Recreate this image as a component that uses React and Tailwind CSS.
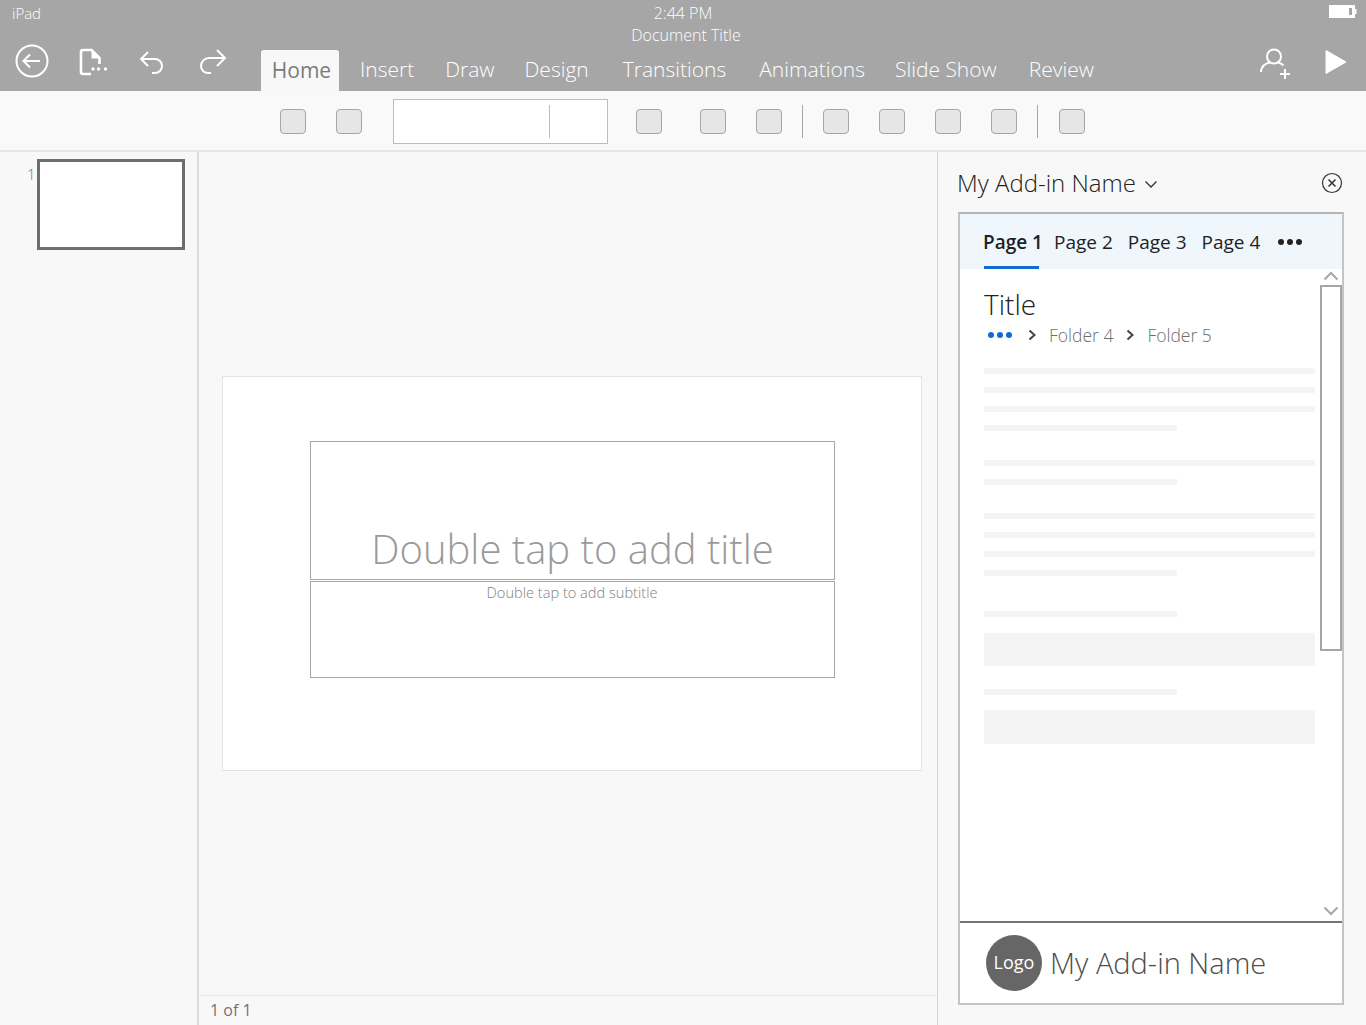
import React from 'react';

const tabs = [
  { label: 'Insert', left: 'ml-[21px]' },
  { label: 'Draw', left: 'ml-[31px]' },
  { label: 'Design', left: 'ml-[30px]' },
  { label: 'Transitions', left: 'ml-[34px]' },
  { label: 'Animations', left: 'ml-[33px]' },
  { label: 'Slide Show', left: 'ml-[30px]' },
  { label: 'Review', left: 'ml-[32px]' },
];

const ToolButton = ({ className = '' }) => (
  <div className={`w-[26px] h-[25px] rounded-[4px] border border-[#a6a6a6] bg-[#e6e6e6] shrink-0 ${className}`} />
);

const Line = ({ short, className = '' }) => (
  <div className={`h-[6px] bg-[#f4f4f4] ${short ? 'w-[193px]' : 'w-[331px]'} ${className}`} />
);

const Dots = ({ color, className = '' }) => (
  <div className={`flex gap-[3px] ${className}`}>
    <div className={`w-[6px] h-[6px] rounded-full ${color}`} />
    <div className={`w-[6px] h-[6px] rounded-full ${color}`} />
    <div className={`w-[6px] h-[6px] rounded-full ${color}`} />
  </div>
);

const Chevron = ({ className = '' }) => (
  <svg width="9" height="12" viewBox="0 0 9 12" fill="none" stroke="#444" strokeWidth="2" className={className}>
    <path d="M1.5 1.5 6.5 6 1.5 10.5" />
  </svg>
);

export default function App() {
  return (
    <div className="w-[1366px] h-[1025px] flex flex-col overflow-hidden bg-[#f8f8f8] font-['Open_Sans',sans-serif] font-light">
      {/* Title bar and ribbon tabs */}
      <div className="h-[91px] bg-[#a6a6a6] text-white shrink-0 flex flex-col">
        <div className="h-[46px] relative flex justify-center shrink-0">
          <div className="absolute left-[12px] top-[3px] text-[15px] leading-[20px]">iPad</div>
          <div className="text-center text-[16px] leading-[20px] pt-[3px]">
            <div>2:44 PM</div>
            <div className="mt-[2px] pl-[6px]">Document Title</div>
          </div>
          <svg width="28" height="14" viewBox="0 0 28 14" className="absolute left-[1329px] top-[5px]">
            <rect x="0" y="0" width="26" height="13" fill="#fff" />
            <rect x="20" y="3" width="3" height="7" fill="#a6a6a6" />
            <rect x="26" y="4" width="1.5" height="5" fill="#fff" />
          </svg>
        </div>
        <div className="flex-1 flex items-stretch relative">
          <div className="w-[261px] shrink-0 relative">
            <svg width="36" height="36" viewBox="0 0 36 36" fill="none" stroke="#fff" strokeWidth="2" className="absolute left-[14px] top-[-3px]">
              <circle cx="18" cy="18" r="15.5" />
              <path d="M26 18H10M16 11.5 9.5 18l6.5 6.5" />
            </svg>
            <svg width="32" height="30" viewBox="0 0 32 30" fill="none" stroke="#fff" className="absolute left-[79px] top-[2px]">
              <path d="M12 26H4a2 2 0 0 1-2-2V4a2 2 0 0 1 2-2h8.500l8 8v6" strokeWidth="2.600" strokeLinejoin="round" />
              <path d="M13 2.500V10h7z" fill="#fff" strokeWidth="1" />
              <circle cx="14" cy="21" r="1.700" fill="#fff" stroke="none" />
              <circle cx="19.500" cy="21" r="1.700" fill="#fff" stroke="none" />
              <circle cx="26.500" cy="21" r="1.700" fill="#fff" stroke="none" />
            </svg>
            <svg width="26" height="26" viewBox="0 0 26 26" fill="none" stroke="#fff" strokeWidth="2" className="absolute left-[139px] top-[4px]">
              <path d="M9 2 2 9l7 7M2 9h14a7 7 0 0 1 7 7 7 7 0 0 1-7 7h-3" />
            </svg>
            <svg width="28" height="28" viewBox="0 0 28 28" fill="none" stroke="#fff" strokeWidth="2" className="absolute left-[199px] top-[2px]">
              <path d="M18 2l8 8-8 8M26 10H10a8 8 0 0 0-8 8 7 7 0 0 0 7 7h3" />
            </svg>
          </div>
          <div className="w-[78px] h-[41px] mt-[4px] bg-[#f8f8f8] rounded-t-[3px] text-[#7a7a7a] text-[21px] leading-[40px] text-center font-normal shrink-0 pl-[3px]">
            Home
          </div>
          {tabs.map((t) => (
            <div key={t.label} className={`text-[21px] leading-[46px] whitespace-nowrap ${t.left}`}>
              {t.label}
            </div>
          ))}
          <svg width="34" height="34" viewBox="0 0 34 34" fill="none" stroke="#fff" strokeWidth="2" className="absolute left-[1259px] top-[1px]">
            <circle cx="15" cy="9.500" r="7" />
            <path d="M2 25c0-6 5-9 9-9.500M19 15.500c2 .5 4 1.500 5.500 3" />
            <path d="M26 22v10M21 27h10" />
          </svg>
          <svg width="22" height="26" viewBox="0 0 22 26" className="absolute left-[1325px] top-[3px]">
            <path d="M1 1.500 21 13 1 24.500Z" fill="#fff" stroke="#fff" strokeLinejoin="round" />
          </svg>
        </div>
      </div>

      {/* Ribbon commands */}
      <div className="h-[61px] shrink-0 bg-[#f9f9f9] border-b-2 border-[#e6e6e6] flex items-center pl-[280px] pt-[1px]">
        <ToolButton />
        <ToolButton className="ml-[30px]" />
        <div className="ml-[31px] w-[215px] h-[45px] bg-white border border-[#bdbdbd] flex items-center pl-[155px] shrink-0">
          <div className="w-px h-[33px] bg-[#bdbdbd]" />
        </div>
        <ToolButton className="ml-[28px]" />
        <ToolButton className="ml-[38px]" />
        <ToolButton className="ml-[30px]" />
        <div className="ml-[20px] w-px h-[33px] bg-[#a6a6a6]" />
        <ToolButton className="ml-[20px]" />
        <ToolButton className="ml-[30px]" />
        <ToolButton className="ml-[30px]" />
        <ToolButton className="ml-[30px]" />
        <div className="ml-[20px] w-px h-[33px] bg-[#a6a6a6]" />
        <ToolButton className="ml-[21px]" />
      </div>

      <div className="flex-1 flex min-h-0">
        {/* Slide rail */}
        <div className="w-[199px] shrink-0 border-r-2 border-[#dcdcdc] pl-[27px] pt-[7px] flex items-start">
          <div className="text-[15px] leading-[20px] text-[#777] w-[9px] mt-[5px]">1</div>
          <div className="w-[148px] h-[91px] bg-white border-[3px] border-[#6e6e6e] ml-[1px]" />
        </div>

        {/* Slide stage */}
        <div className="flex-1 flex flex-col min-w-0">
          <div className="flex-1 flex items-center pl-[23px]">
            <div className="w-[700px] h-[395px] bg-white border border-[#e3e3e3] pt-[64px] flex flex-col items-center">
              <div className="w-[525px] ml-[1px] h-[139px] border border-[#a6a6a6] flex items-end justify-center text-[40px] leading-[54px] text-[#9a9a9a] pb-[3px]">
                Double tap to add title
              </div>
              <div className="w-[525px] h-[97px] mt-[1px] border border-[#a6a6a6] text-center text-[14.600px] leading-[19px] text-[#808080] pt-[1px]">
                Double tap to add subtitle
              </div>
            </div>
          </div>
          <div className="h-[30px] border-t border-[#e6e6e6] pl-[11px] text-[16px] leading-[29px] text-[#737373] font-normal">
            1 of 1
          </div>
        </div>

        {/* Task pane */}
        <div className="w-[429px] shrink-0 border-l border-[#d6d6d6] pl-[19px] flex flex-col">
          <div className="h-[60px] flex items-center shrink-0 pt-[2px]">
            <div className="text-[24px] leading-[32px] text-[#222]">My Add-in Name</div>
            <svg width="14" height="9" viewBox="0 0 14 9" fill="none" stroke="#333" strokeWidth="1.300" className="ml-[8px] mt-[3px]">
              <path d="M1.500 1.500 7 7l5.500-5.500" />
            </svg>
            <svg width="22" height="22" viewBox="0 0 22 22" fill="none" stroke="#333" className="ml-[163px]">
              <circle cx="11" cy="11" r="9.500" strokeWidth="1.200" />
              <path d="M7.500 7.500l7 7M14.500 7.500l-7 7" strokeWidth="1.500" />
            </svg>
          </div>

          <div className="w-[386px] h-[793px] ml-[1px] border-2 border-[#c4c4c4] border-t-[#b5b5b5] bg-white flex flex-col">
            <div className="h-[55px] bg-[#eff6fc] flex shrink-0 pl-[23px] text-[#1f1f1f] text-[19px] font-normal">
              <div className="w-[55px] relative leading-[56px] font-semibold whitespace-nowrap">
                Page 1
                <div className="absolute left-[1px] bottom-0 w-[55px] h-[3px] bg-[#0f6cd0]" />
              </div>
              <div className="ml-[16px] leading-[56px] whitespace-nowrap">Page 2</div>
              <div className="ml-[15px] leading-[56px] whitespace-nowrap">Page 3</div>
              <div className="ml-[15px] leading-[56px] whitespace-nowrap">Page 4</div>
              <Dots color="bg-[#222]" className="ml-[18px] mt-[25px]" />
            </div>

            <div className="flex-1 flex min-h-0">
              <div className="flex-1 pl-[24px] pt-[17px] min-w-0">
                <div className="text-[28px] leading-[36px] text-[#222]">Title</div>
                <div className="flex items-center h-[24px] mt-[1px] text-[17.500px] text-[#6e6e6e]">
                  <Dots color="bg-[#0f6cd0]" className="ml-[4px]" />
                  <Chevron className="ml-[16px]" />
                  <div className="ml-[12px]">Folder 4</div>
                  <Chevron className="ml-[13px]" />
                  <div className="ml-[12px]">Folder 5</div>
                </div>
                <Line className="mt-[21px]" />
                <Line className="mt-[13px]" />
                <Line className="mt-[13px]" />
                <Line short className="mt-[13px]" />
                <Line className="mt-[29px]" />
                <Line short className="mt-[13px]" />
                <Line className="mt-[28px]" />
                <Line className="mt-[13px]" />
                <Line className="mt-[13px]" />
                <Line short className="mt-[13px]" />
                <Line short className="mt-[35px]" />
                <div className="w-[331px] h-[33px] bg-[#f4f4f4] mt-[16px]" />
                <Line short className="mt-[23px]" />
                <div className="w-[331px] h-[34px] bg-[#f4f4f4] mt-[15px]" />
              </div>
              <div className="w-[22px] shrink-0 flex flex-col items-center">
                <svg width="16" height="10" viewBox="0 0 16 10" fill="none" stroke="#a6a6a6" strokeWidth="2" className="mt-[2px]">
                  <path d="M1.500 8.500 8 2l6.500 6.500" />
                </svg>
                <div className="w-[22px] h-[366px] mt-[4px] border-2 border-[#a6a6a6] bg-white" />
                <svg width="16" height="10" viewBox="0 0 16 10" fill="none" stroke="#a6a6a6" strokeWidth="2" className="mt-auto mb-[5px]">
                  <path d="M1.500 1.500 8 8l6.500-6.500" />
                </svg>
              </div>
            </div>

            <div className="h-[82px] border-t-2 border-[#757575] shrink-0 flex items-center pl-[26px] pb-[1px]">
              <div className="w-[56px] h-[56px] rounded-full bg-[#666] text-white text-[18px] font-normal flex items-center justify-center">
                Logo
              </div>
              <div className="ml-[8px] text-[29px] leading-[38px] text-[#4d4d4d]">My Add-in Name</div>
            </div>
          </div>
        </div>
      </div>
    </div>
  );
}
